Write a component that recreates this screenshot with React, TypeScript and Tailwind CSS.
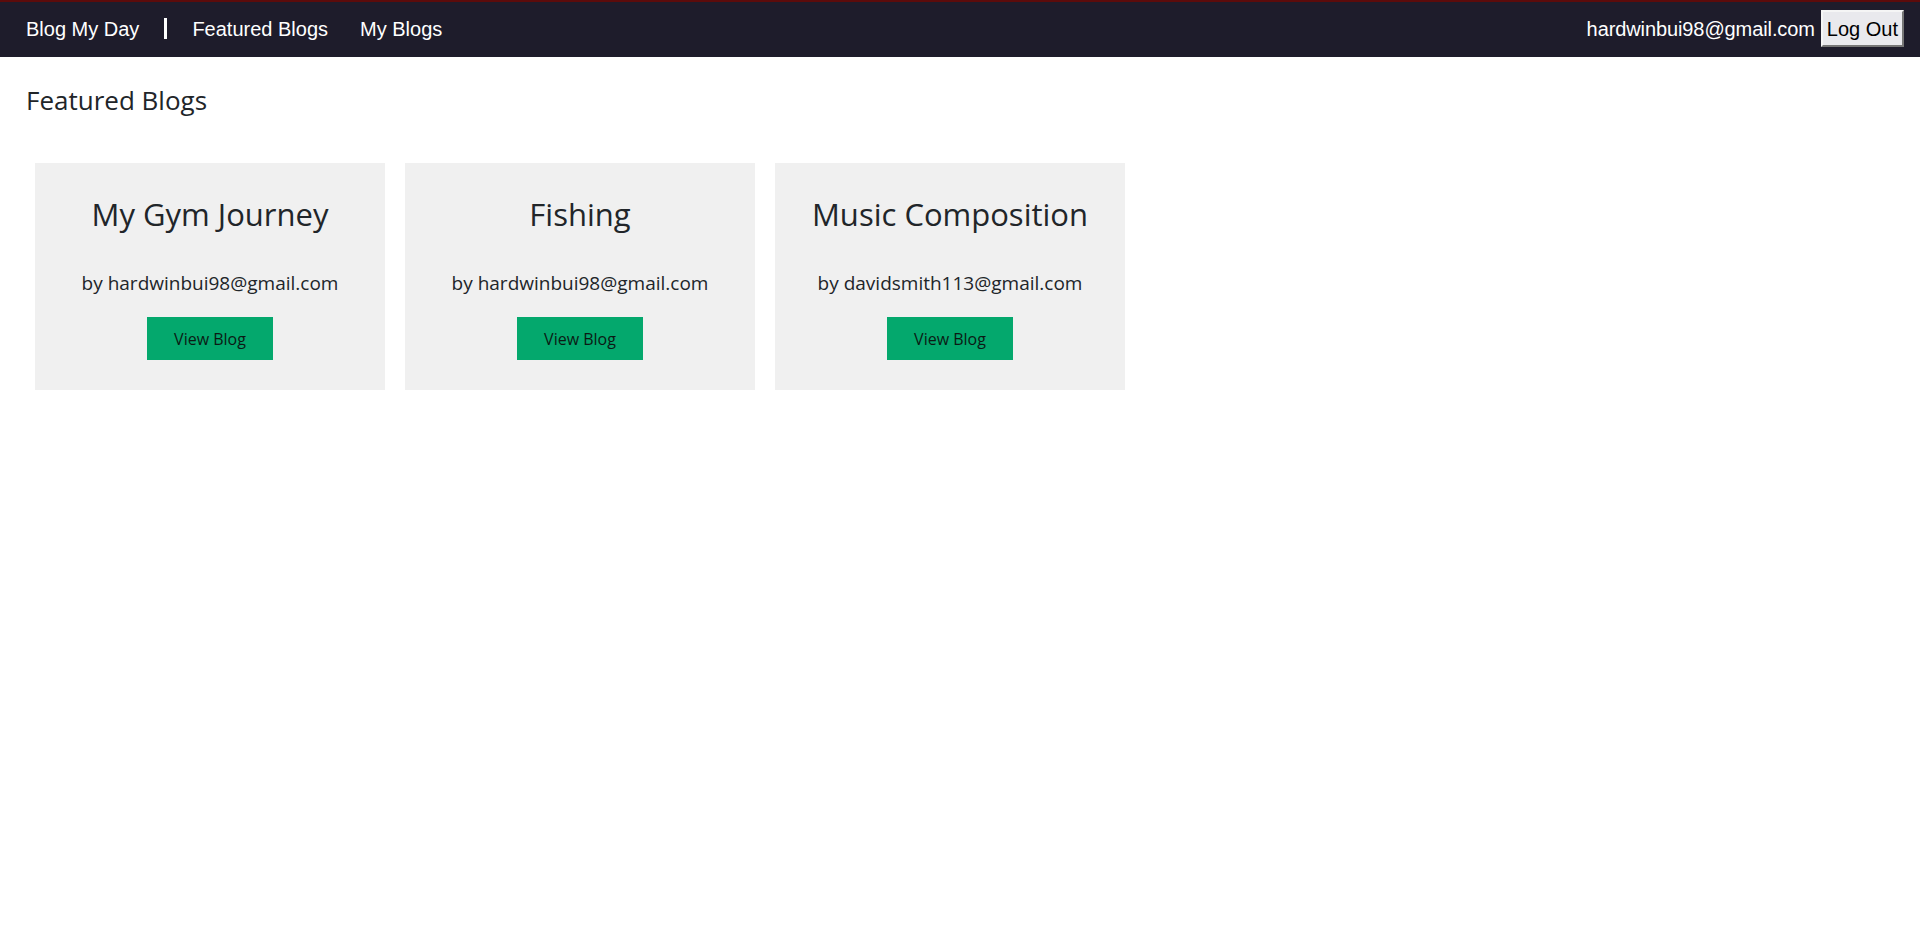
const blogs = [
  { title: "My Gym Journey", author: "hardwinbui98@gmail.com" },
  { title: "Fishing", author: "hardwinbui98@gmail.com" },
  { title: "Music Composition", author: "davidsmith113@gmail.com" },
];

const navFont = { fontFamily: '"Liberation Sans", Arial, sans-serif' };
const bodyFont = { fontFamily: '"Open Sans", "Noto Sans", sans-serif' };

const BlogCard = ({ title, author }: { title: string; author: string }) => {
  return (
    <div className="w-[350px] h-[227px] bg-[#f0f0f0] flex flex-col items-center pt-[33px] text-[#212529]">
      <h2 className="text-[31px] leading-[36px] font-normal">{title}</h2>
      <p className="mt-[40px] text-[19px] leading-[23px]">by {author}</p>
      <button className="mt-[22px] w-[126px] h-[43px] bg-[#04a86d] text-[16px] text-[#0b1a14]">
        View Blog
      </button>
    </div>
  );
};

export default function App() {
  return (
    <div className="min-h-screen bg-white">
      {/* top nav */}
      <nav
        className="h-[57px] bg-[#1e1c2b] border-t-2 border-[#5c0b0b] flex items-center justify-between pl-[10px] pr-[16px] pb-[2px] text-white text-[20px]"
        style={navFont}
      >
        <div className="flex items-center">
          <a className="px-4">Blog My Day</a>
          <span className="mx-[9px] w-[3px] h-[21px] bg-white" />
          <a className="px-4">Featured Blogs</a>
          <a className="px-4">My Blogs</a>
        </div>
        <div className="flex items-center gap-[6px]">
          <span className="tracking-[-0.1px]">hardwinbui98@gmail.com</span>
          <button className="h-[37px] px-[4px] bg-[#e9e9ed] text-black border-2 border-t-[#f5f5f5] border-l-[#f5f5f5] border-r-[#767676] border-b-[#767676]">
            Log Out
          </button>
        </div>
      </nav>

      <main className="px-[26px]" style={bodyFont}>
        <h3 className="mt-[27px] text-[26px] leading-[32px] text-[#212529]">Featured Blogs</h3>
        <div className="mt-[47px] ml-[9px] flex gap-[20px]">
          {blogs.map((b) => (
            <BlogCard key={b.title} title={b.title} author={b.author} />
          ))}
        </div>
      </main>
    </div>
  );
}
